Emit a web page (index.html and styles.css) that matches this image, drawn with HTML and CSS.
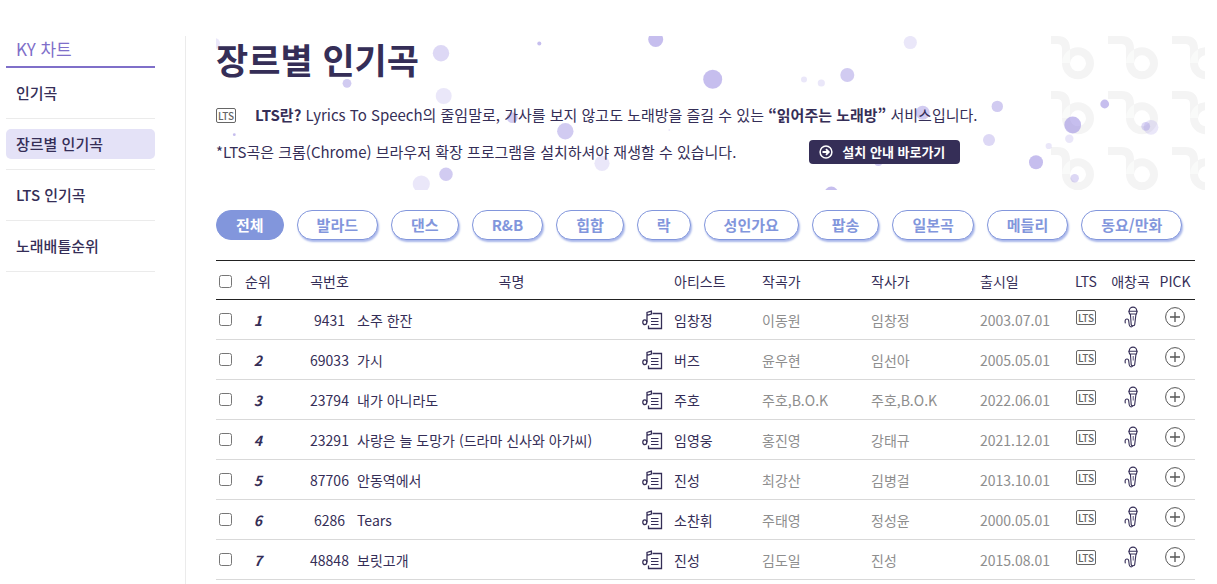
FILE: index.html
```html
<!DOCTYPE html>
<html lang="ko">
<head>
    <meta charset="UTF-8">
    <meta name="viewport" content="width=device-width, initial-scale=1.0">
    <title>장르별 인기곡</title>
    <link rel="stylesheet" href="styles.css">
</head>
<body>

    <!-- 아이콘 -->
    <svg class="icon-defs" aria-hidden="true">
        <symbol id="icon-lyrics" viewBox="0 0 21 20">
            <g fill="none" stroke="#352e57" stroke-width="1.3">
                <ellipse cx="2.8" cy="12.3" rx="2" ry="2.4"/>
                <path d="M5 12.3V2.4L9.4 1.2V4L5 5.4M10.5 3.5H19.5V18.5H6.5V15.5"/>
                <path d="M9 8.5H16.5M9 11.5H16.5M9 14.5H16.5" stroke-width="1.1"/>
            </g>
        </symbol>
        <symbol id="icon-mic" viewBox="0 0 14 22">
            <g fill="none" stroke="#352e57" stroke-width="1.1">
                <path d="M5.3 5.2V4.8a3.7 3.7 0 0 1 7.4 0V5.2"/>
                <path d="M4.8 5.2H13.2L12.4 8H5.6Z" fill="#fff"/>
                <path d="M6.4 8L7.2 18.6C7.4 20.2 10.4 20.2 10.7 18.6L12 8"/>
                <path d="M9.3 10V14.5" stroke="#8b86a3" stroke-width="1.5"/>
                <path d="M8.8 20C7.5 21.4 5.5 21 5.2 18.8L4.7 14.6C4.4 12.6 1.7 12.4 1.2 14.4C1 15.6 1.1 16.6 1.4 17.4"/>
            </g>
        </symbol>
        <symbol id="icon-plus" viewBox="0 0 20 20">
            <g fill="none" stroke="#555">
                <circle cx="10" cy="10" r="9.4"/>
                <path d="M10 5V15M5 10H15" stroke-width="1.3"/>
            </g>
        </symbol>
        <symbol id="icon-go" viewBox="0 0 14 14">
            <circle cx="7" cy="7" r="5.9" fill="none" stroke="#fff" stroke-width="1.5"/>
            <path d="M3.5 7H9.5M7 4.2L9.8 7L7 9.8" fill="none" stroke="#fff" stroke-width="1.8"/>
        </symbol>
        <symbol id="logo-b" viewBox="0 0 52 46" overflow="visible">
            <path d="M0 4H13Q22 4 22 13V27" fill="none" stroke="#f4f4f4" stroke-width="8"/>
            <circle cx="34" cy="27.3" r="12" fill="none" stroke="#f4f4f4" stroke-width="8"/>
            <path d="M18 27A16 16 0 0 1 26 13.4V27Z" fill="#f9faf9"/>
        </symbol>
    </svg>

    <div class="wrap">
        <aside class="sidebar">
            <h2>KY 차트</h2>
            <ul class="menu">
                <li><a href="#">인기곡</a></li>
                <li><a href="#" class="on">장르별 인기곡</a></li>
                <li><a href="#">LTS 인기곡</a></li>
                <li><a href="#">노래배틀순위</a></li>
            </ul>
        </aside>

        <main class="content">
            <header class="banner">
                <svg class="banner-bg" aria-hidden="true">
                    <svg x="835" width="154" height="154">
                        <use href="#logo-b" x="-7" y="0" width="52" height="46"/>
                        <use href="#logo-b" x="57" y="0" width="52" height="46"/>
                        <use href="#logo-b" x="121" y="0" width="52" height="46"/>
                        <use href="#logo-b" x="-7" y="55" width="52" height="46"/>
                        <use href="#logo-b" x="57" y="55" width="52" height="46"/>
                        <use href="#logo-b" x="121" y="55" width="52" height="46"/>
                        <use href="#logo-b" x="-7" y="111" width="52" height="46"/>
                        <use href="#logo-b" x="57" y="111" width="52" height="46"/>
                        <use href="#logo-b" x="121" y="111" width="52" height="46"/>
                    </svg>
                    <g fill="#8d7edd">
                        <g fill-opacity=".19">
                            <circle cx="-1.5" cy="7.5" r="5.5"/>
                            <circle cx="227.7" cy="60" r="8"/>
                            <circle cx="205.3" cy="148" r="8.6"/>
                            <circle cx="386" cy="127.3" r="7.6"/>
                            <circle cx="453.3" cy="94" r="1"/>
                            <circle cx="694.3" cy="6.5" r="6.6"/>
                            <circle cx="588" cy="43.5" r="3"/>
                            <circle cx="605.3" cy="47" r="3.6"/>
                            <circle cx="832.7" cy="110" r="3.1"/>
                            <circle cx="853.3" cy="102.7" r="4.2"/>
                            <circle cx="935" cy="91.3" r="7.4"/>
                        </g>
                        <g fill-opacity=".3">
                            <circle cx="225" cy="17.3" r="8.2"/>
                            <circle cx="773" cy="104" r="6"/>
                            <circle cx="858.7" cy="142.3" r="4.2"/>
                            <circle cx="929.7" cy="90.3" r="4.4"/>
                        </g>
                        <g fill-opacity=".4">
                            <circle cx="631.3" cy="39" r="7"/>
                            <circle cx="131" cy="47.3" r="4.4"/>
                            <circle cx="230" cy="138.3" r="6.7"/>
                            <circle cx="296.3" cy="81.7" r="5.4"/>
                            <circle cx="349.3" cy="95.3" r="8.2"/>
                            <circle cx="706.7" cy="76.7" r="7"/>
                            <circle cx="781.3" cy="70.4" r="5.7"/>
                            <circle cx="662.3" cy="126" r="4"/>
                        </g>
                        <g fill-opacity=".5">
                            <circle cx="18.3" cy="98.7" r="1.4"/>
                            <circle cx="323.3" cy="7.6" r="2"/>
                            <circle cx="439.7" cy="3.5" r="7.5"/>
                            <circle cx="496.7" cy="43.3" r="9.5"/>
                            <circle cx="615.3" cy="157.6" r="7"/>
                            <circle cx="820" cy="126.3" r="7"/>
                            <circle cx="888.7" cy="68" r="4.4"/>
                            <circle cx="856.7" cy="89" r="8.4"/>
                        </g>
                    </g>
                </svg>
                <div class="banner-text">
                    <h1>장르별 인기곡</h1>
                    <p class="lts-desc">
                        <span class="lts">LTS</span>
                        <span><strong>LTS란?</strong> Lyrics To Speech의 줄임말로, 가사를 보지 않고도 노래방을 즐길 수 있는 <strong>“읽어주는 노래방”</strong> 서비스입니다.</span>
                    </p>
                    <p class="lts-guide">
                        <span>*LTS곡은 크롬(Chrome) 브라우저 확장 프로그램을 설치하셔야 재생할 수 있습니다.</span>
                        <a href="#" class="btn-guide"><svg><use href="#icon-go"/></svg>설치 안내 바로가기</a>
                    </p>
                </div>
            </header>

            <!-- 장르 탭 -->
            <nav class="genres">
                <button type="button" class="on">전체</button>
                <button type="button">발라드</button>
                <button type="button">댄스</button>
                <button type="button">R&amp;B</button>
                <button type="button">힙합</button>
                <button type="button">락</button>
                <button type="button">성인가요</button>
                <button type="button">팝송</button>
                <button type="button">일본곡</button>
                <button type="button">메들리</button>
                <button type="button">동요/만화</button>
            </nav>

            <!-- 차트 -->
            <table class="chart">
                <colgroup>
                    <col class="w-check">
                    <col class="w-rank">
                    <col class="w-num">
                    <col>
                    <col class="w-lyrics">
                    <col class="w-artist">
                    <col class="w-writer">
                    <col class="w-writer">
                    <col class="w-date">
                    <col class="w-lts">
                    <col class="w-mic">
                    <col class="w-pick">
                </colgroup>
                <thead>
                    <tr>
                        <th class="check"><input type="checkbox" aria-label="전체 선택"></th>
                        <th>순위</th>
                        <th class="num">곡번호</th>
                        <th colspan="2">곡명</th>
                        <th class="artist">아티스트</th>
                        <th class="left">작곡가</th>
                        <th class="left">작사가</th>
                        <th class="left">출시일</th>
                        <th>LTS</th>
                        <th>애창곡</th>
                        <th>PICK</th>
                    </tr>
                </thead>
                <tbody>
                    <tr>
                        <td class="check"><input type="checkbox" aria-label="소주 한잔"></td>
                        <td class="rank">1</td>
                        <td class="num">9431</td>
                        <td class="left">소주 한잔</td>
                        <td><button type="button" class="ico" aria-label="가사"><svg class="lyrics"><use href="#icon-lyrics"/></svg></button></td>
                        <td class="artist">임창정</td>
                        <td class="gray">이동원</td>
                        <td class="gray">임창정</td>
                        <td class="gray">2003.07.01</td>
                        <td class="act"><span class="lts">LTS</span></td>
                        <td class="act"><button type="button" class="ico" aria-label="애창곡"><svg class="mic"><use href="#icon-mic"/></svg></button></td>
                        <td class="act"><button type="button" class="ico" aria-label="PICK"><svg class="plus"><use href="#icon-plus"/></svg></button></td>
                    </tr>
                    <tr>
                        <td class="check"><input type="checkbox" aria-label="가시"></td>
                        <td class="rank">2</td>
                        <td class="num">69033</td>
                        <td class="left">가시</td>
                        <td><button type="button" class="ico" aria-label="가사"><svg class="lyrics"><use href="#icon-lyrics"/></svg></button></td>
                        <td class="artist">버즈</td>
                        <td class="gray">윤우현</td>
                        <td class="gray">임선아</td>
                        <td class="gray">2005.05.01</td>
                        <td class="act"><span class="lts">LTS</span></td>
                        <td class="act"><button type="button" class="ico" aria-label="애창곡"><svg class="mic"><use href="#icon-mic"/></svg></button></td>
                        <td class="act"><button type="button" class="ico" aria-label="PICK"><svg class="plus"><use href="#icon-plus"/></svg></button></td>
                    </tr>
                    <tr>
                        <td class="check"><input type="checkbox" aria-label="내가 아니라도"></td>
                        <td class="rank">3</td>
                        <td class="num">23794</td>
                        <td class="left">내가 아니라도</td>
                        <td><button type="button" class="ico" aria-label="가사"><svg class="lyrics"><use href="#icon-lyrics"/></svg></button></td>
                        <td class="artist">주호</td>
                        <td class="gray">주호,B.O.K</td>
                        <td class="gray">주호,B.O.K</td>
                        <td class="gray">2022.06.01</td>
                        <td class="act"><span class="lts">LTS</span></td>
                        <td class="act"><button type="button" class="ico" aria-label="애창곡"><svg class="mic"><use href="#icon-mic"/></svg></button></td>
                        <td class="act"><button type="button" class="ico" aria-label="PICK"><svg class="plus"><use href="#icon-plus"/></svg></button></td>
                    </tr>
                    <tr>
                        <td class="check"><input type="checkbox" aria-label="사랑은 늘 도망가"></td>
                        <td class="rank">4</td>
                        <td class="num">23291</td>
                        <td class="left">사랑은 늘 도망가 (드라마 신사와 아가씨)</td>
                        <td><button type="button" class="ico" aria-label="가사"><svg class="lyrics"><use href="#icon-lyrics"/></svg></button></td>
                        <td class="artist">임영웅</td>
                        <td class="gray">홍진영</td>
                        <td class="gray">강태규</td>
                        <td class="gray">2021.12.01</td>
                        <td class="act"><span class="lts">LTS</span></td>
                        <td class="act"><button type="button" class="ico" aria-label="애창곡"><svg class="mic"><use href="#icon-mic"/></svg></button></td>
                        <td class="act"><button type="button" class="ico" aria-label="PICK"><svg class="plus"><use href="#icon-plus"/></svg></button></td>
                    </tr>
                    <tr>
                        <td class="check"><input type="checkbox" aria-label="안동역에서"></td>
                        <td class="rank">5</td>
                        <td class="num">87706</td>
                        <td class="left">안동역에서</td>
                        <td><button type="button" class="ico" aria-label="가사"><svg class="lyrics"><use href="#icon-lyrics"/></svg></button></td>
                        <td class="artist">진성</td>
                        <td class="gray">최강산</td>
                        <td class="gray">김병걸</td>
                        <td class="gray">2013.10.01</td>
                        <td class="act"><span class="lts">LTS</span></td>
                        <td class="act"><button type="button" class="ico" aria-label="애창곡"><svg class="mic"><use href="#icon-mic"/></svg></button></td>
                        <td class="act"><button type="button" class="ico" aria-label="PICK"><svg class="plus"><use href="#icon-plus"/></svg></button></td>
                    </tr>
                    <tr>
                        <td class="check"><input type="checkbox" aria-label="Tears"></td>
                        <td class="rank">6</td>
                        <td class="num">6286</td>
                        <td class="left">Tears</td>
                        <td><button type="button" class="ico" aria-label="가사"><svg class="lyrics"><use href="#icon-lyrics"/></svg></button></td>
                        <td class="artist">소찬휘</td>
                        <td class="gray">주태영</td>
                        <td class="gray">정성윤</td>
                        <td class="gray">2000.05.01</td>
                        <td class="act"><span class="lts">LTS</span></td>
                        <td class="act"><button type="button" class="ico" aria-label="애창곡"><svg class="mic"><use href="#icon-mic"/></svg></button></td>
                        <td class="act"><button type="button" class="ico" aria-label="PICK"><svg class="plus"><use href="#icon-plus"/></svg></button></td>
                    </tr>
                    <tr>
                        <td class="check"><input type="checkbox" aria-label="보릿고개"></td>
                        <td class="rank">7</td>
                        <td class="num">48848</td>
                        <td class="left">보릿고개</td>
                        <td><button type="button" class="ico" aria-label="가사"><svg class="lyrics"><use href="#icon-lyrics"/></svg></button></td>
                        <td class="artist">진성</td>
                        <td class="gray">김도일</td>
                        <td class="gray">진성</td>
                        <td class="gray">2015.08.01</td>
                        <td class="act"><span class="lts">LTS</span></td>
                        <td class="act"><button type="button" class="ico" aria-label="애창곡"><svg class="mic"><use href="#icon-mic"/></svg></button></td>
                        <td class="act"><button type="button" class="ico" aria-label="PICK"><svg class="plus"><use href="#icon-plus"/></svg></button></td>
                    </tr>
                </tbody>
            </table>
        </main>
    </div>

</body>
</html>
```
FILE: styles.css
```css
* {
    box-sizing: border-box;
}

body {
    margin: 0;
    font-family: "Noto Sans CJK KR", "Noto Sans", sans-serif;
    font-size: 14px;
    line-height: 20px;
    color: #352e57;
    background-color: #fff;
}

h1, h2, p, ul {
    margin: 0;
    padding: 0;
}

a {
    color: inherit;
    text-decoration: none;
}

button {
    font-family: inherit;
    cursor: pointer;
}

.icon-defs {
    position: absolute;
    width: 0;
    height: 0;
}

.wrap {
    display: flex;
    min-height: 100vh;
    padding: 36px 12px 0 6px;
}

/* 왼쪽 메뉴 */
.sidebar {
    flex: none;
    width: 180px;
    padding-right: 30px;
    border-right: 1px solid #ebebeb;
}

.sidebar h2 {
    padding: 0 10px 4px;
    border-bottom: 2px solid #7f6fc9;
    font-size: 17px;
    font-weight: 400;
    line-height: 26px;
    color: #7f6fc9;
}

.menu {
    list-style: none;
}

.menu li {
    padding: 10px 0;
    border-bottom: 1px solid #ebebeb;
}

.menu a {
    display: block;
    padding: 0 10px;
    border-radius: 5px;
    font-size: 15px;
    font-weight: 500;
    line-height: 30px;
}

.menu a.on {
    background-color: #e4e2f7;
}

.content {
    flex: 1;
    min-width: 0;
    padding-left: 30px;
}

/* 상단 배너 */
.banner {
    position: relative;
    height: 154px;
}

.banner-bg {
    position: absolute;
    top: 0;
    left: 0;
    width: 100%;
    height: 100%;
    overflow: hidden;
}

.banner-text {
    position: relative;
    font-size: 15px;
    line-height: 24px;
}

.banner h1 {
    margin-bottom: 21px;
    font-size: 35px;
    font-weight: 700;
    line-height: 46px;
}

.lts-desc,
.lts-guide {
    display: flex;
    align-items: center;
}

.lts-desc {
    gap: 19px;
    margin-bottom: 13px;
}

.lts-guide {
    gap: 73px;
}

.btn-guide {
    display: flex;
    align-items: center;
    gap: 9px;
    padding: 0 15px 0 10px;
    border-radius: 4px;
    background-color: #352e57;
    color: #fff;
    font-size: 13px;
    font-weight: 700;
}

.btn-guide svg {
    width: 14px;
    height: 14px;
}

/* 장르 탭 */
.genres {
    display: flex;
    flex-wrap: wrap;
    gap: 13px;
    margin: 20px 0;
}

.genres button {
    height: 30px;
    padding: 0 19px;
    border: 1px solid #8296dc;
    border-radius: 15px;
    background-color: #fff;
    box-shadow: 1px 2px 2px #a9b7ea;
    color: #8296dc;
    font-size: 15px;
    font-weight: 700;
    line-height: 28px;
}

.genres button.on {
    background-color: #8296dc;
    box-shadow: none;
    color: #fff;
}

/* 차트 */
.chart {
    width: calc(100% - 10px);
    table-layout: fixed;
    border-spacing: 0;
    white-space: nowrap;
}

.w-check { width: 20px; }
.w-rank { width: 44px; }
.w-num { width: 77px; }
.w-lyrics { width: 26px; }
.w-artist { width: 96px; }
.w-writer { width: 109px; }
.w-date { width: 86px; }
.w-lts { width: 40px; }
.w-mic { width: 49px; }
.w-pick { width: 40px; }

.chart th,
.chart td {
    height: 40px;
    padding: 0;
    border-bottom: 1px solid #d9d9d9;
    text-align: center;
    vertical-align: middle;
}

.chart th {
    padding-top: 2px;
    border-top: 1px solid #222;
    border-bottom-color: #222;
    font-weight: 400;
}

.chart .check,
.chart .left,
.chart .artist,
.chart .gray {
    text-align: left;
}

.chart .num {
    padding-left: 22px;
}

.chart .artist {
    padding-left: 8px;
}

.chart .gray {
    color: #8e8e8e;
}

.chart .rank {
    font-weight: 700;
    font-style: italic;
}

.chart .act {
    padding-bottom: 5px;
}

.chart input {
    display: block;
    width: 13px;
    height: 13px;
    margin: 0 3px;
}

.ico {
    display: block;
    margin: 0 auto;
    padding: 0;
    border: 0;
    background: none;
}

.ico svg {
    display: block;
}

.lts {
    display: block;
    flex: none;
    width: 20px;
    height: 15px;
    border: 1px solid #666;
    border-radius: 2px;
    background-color: #fff;
    color: #666;
    font-size: 10px;
    font-weight: 500;
    line-height: 13px;
    text-align: center;
}

.act .lts {
    margin: 0 auto;
}

.lyrics {
    width: 21px;
    height: 20px;
}

.mic {
    width: 14px;
    height: 22px;
}

.plus {
    width: 20px;
    height: 20px;
}
```
